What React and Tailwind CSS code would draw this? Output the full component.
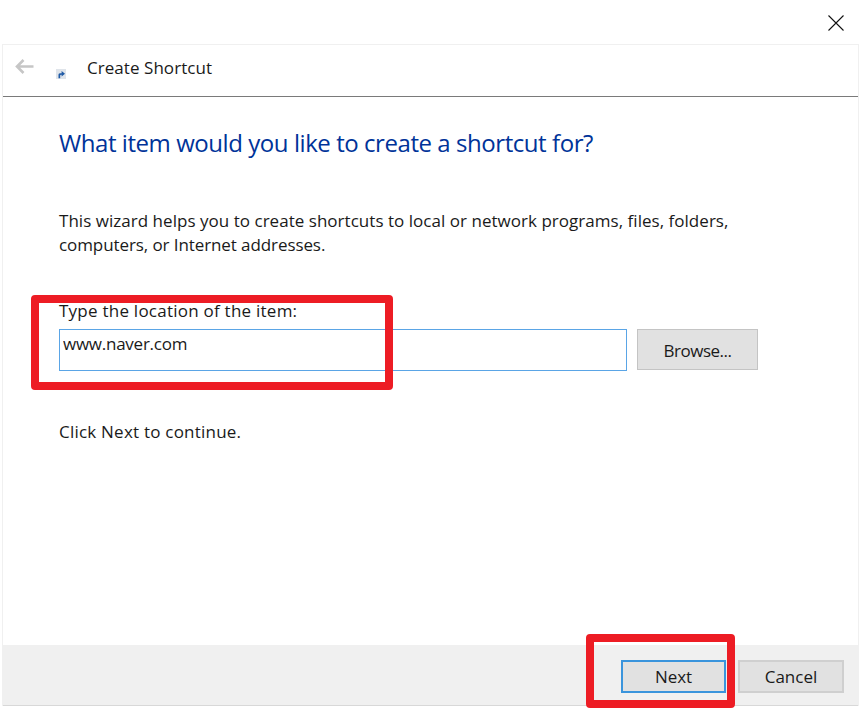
import React from "react";

const font = { fontFamily: '"Open Sans", "Noto Sans", sans-serif' };

function RedBox({ className }) {
  return (
    <div className={`absolute border-8 border-[#ed1c24] rounded-[4px] pointer-events-none ${className}`} />
  );
}

export default function App() {
  return (
    <div className="relative w-[862px] h-[708px] bg-white overflow-hidden text-[#1a1a1a]" style={font}>
      <div className="h-[44px] flex justify-end items-start pt-[15px] pr-[18px]">
        <svg width="16" height="16" viewBox="0 0 16 16" fill="none" stroke="#111" strokeWidth="1.1">
          <path d="M0.5 0.5L15.5 15.5M15.5 0.5L0.5 15.5" />
        </svg>
      </div>

      <div className="ml-[2px] mr-[3px] h-[662px] flex flex-col border-x border-t border-[#f0f0f0]">
        <div className="h-[52px] shrink-0 flex items-center border-b border-[#7a7a7a]">
          <button className="ml-[12px] w-[19px] h-[15px] mt-[-8px]">
            <svg width="19" height="15" viewBox="0 0 19 15" fill="none" stroke="#c6c6c6" strokeWidth="2.6">
              <path d="M18.5 7.5H2.5M8.5 1L2 7.5L8.5 14" />
            </svg>
          </button>
          <svg className="ml-[22px] mt-[6px]" width="10" height="10" viewBox="0 0 10 10">
            <rect width="10" height="10" fill="#dfe4ea" />
            <path d="M2.5 9.2V5.6Q2.5 4.2 4.5 4.2H5.6V2L9 4.8L5.6 7.6V5.8H5Q4.2 5.8 4.2 6.8V9.2Z" fill="#1f5aa6" />
          </svg>
          <span className="ml-[21px] text-[17px] mt-[-6px] tracking-[0.05px] leading-none">Create Shortcut</span>
        </div>

        <div className="flex-1 pl-[56px] flex flex-col">
          <h1 className="mt-[29px] text-[24px] leading-[34px] text-[#003399] font-normal tracking-[-0.44px]">
            What item would you like to create a shortcut for?
          </h1>
          <p className="mt-[49px] text-[17px] leading-[24px] w-[700px]">
            <span className="tracking-[0.03px]">
              This wizard helps you to create shortcuts to local or network programs, files, folders,
            </span>
            <br />
            <span className="tracking-[-0.09px]">computers, or Internet addresses.</span>
          </p>
          <label className="mt-[42px] text-[17px] leading-[24px] tracking-[0.24px]">Type the location of the item:</label>
          <div className="mt-[6px] flex gap-[10px] items-start">
            <input
              readOnly
              value="www.naver.com"
              className="w-[568px] h-[42px] border border-[#5aa5e6] pl-[3px] pb-[14px] text-[17px] tracking-[-0.25px] text-[#1a1a1a] outline-none"
            />
            <button className="w-[121px] h-[41px] bg-[#e1e1e1] border border-[#c4c4c4] text-[17px] tracking-[-0.5px] pt-[2px]">
              Browse...
            </button>
          </div>
          <p className="mt-[49px] text-[17px] leading-[24px] tracking-[0.22px]">Click Next to continue.</p>
        </div>

        <div className="h-[61px] shrink-0 bg-[#f0f0f0] border-b border-[#d8d8d8] flex justify-end items-start pt-[15px] pr-[14px] gap-[12px]">
          <button className="w-[105px] h-[33px] bg-[#e1e1e1] border-2 border-[#3a94dc] text-[17px] tracking-[-0.1px] pt-[1px]">
            Next
          </button>
          <button className="w-[106px] h-[33px] bg-[#e1e1e1] border-2 border-[#cfcfcf] text-[17px] pt-[1px]">
            Cancel
          </button>
        </div>
      </div>

      <RedBox className="left-[31px] top-[295px] w-[362px] h-[95px]" />
      <RedBox className="left-[586px] top-[634px] w-[149px] h-[74px]" />
    </div>
  );
}
